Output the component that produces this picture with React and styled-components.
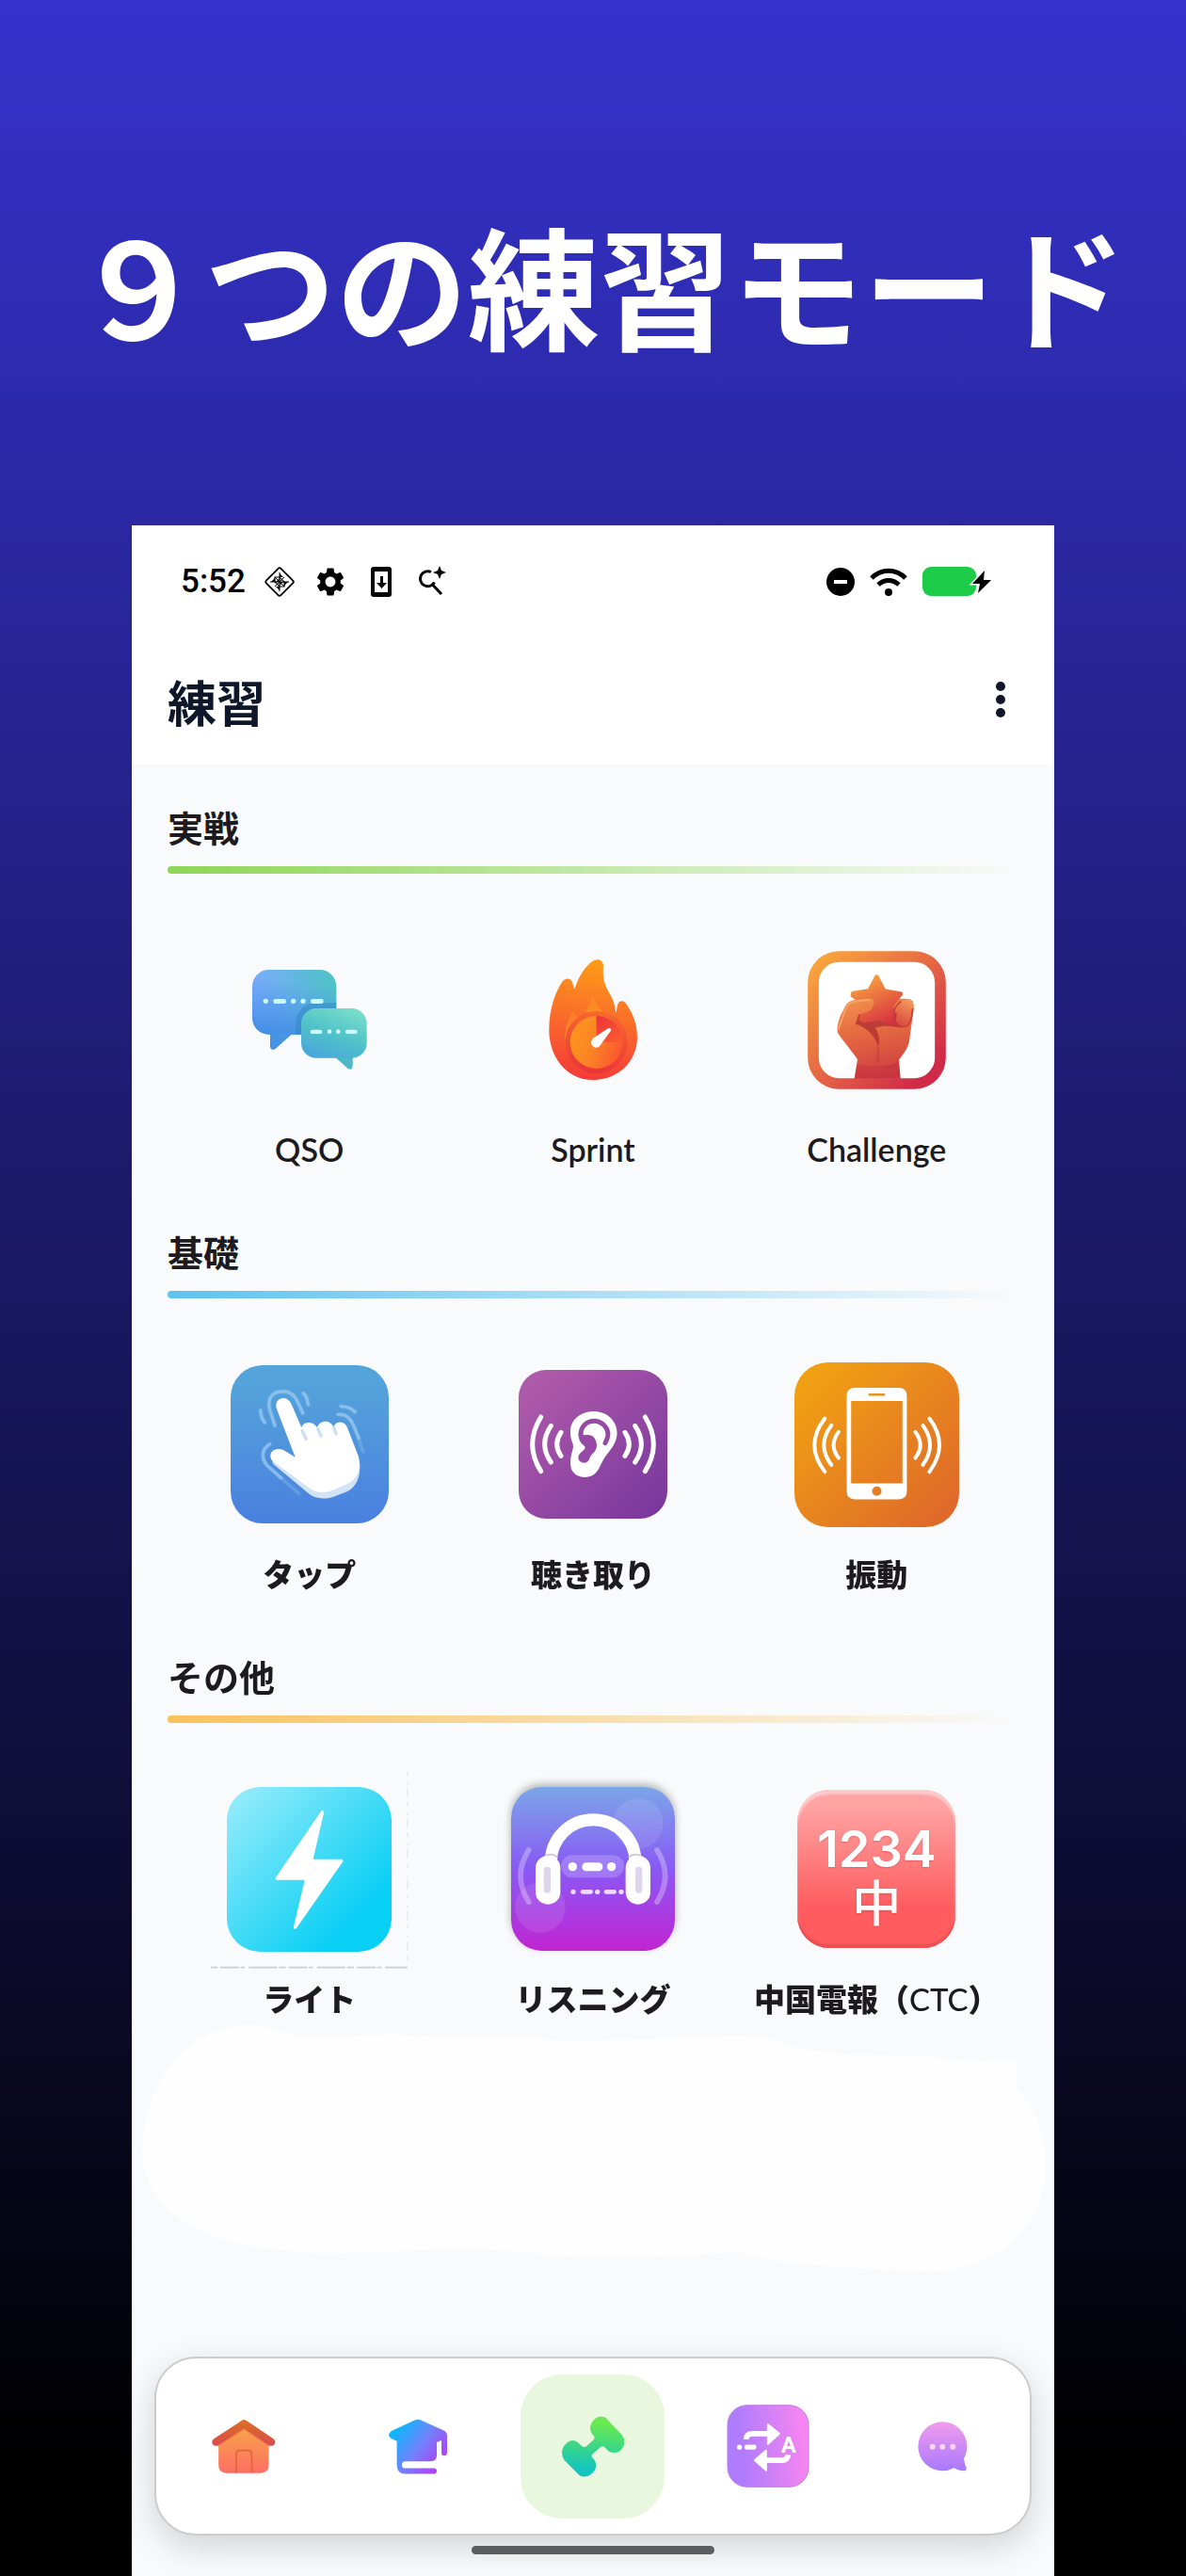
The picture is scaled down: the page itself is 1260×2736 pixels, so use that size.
import React from 'react';
import styled, { createGlobalStyle } from 'styled-components';
import { MdSettings } from 'react-icons/md';
import { useState } from 'react';

const GlobalStyle = createGlobalStyle`
	* {
		box-sizing: border-box;
	}

	body {
		margin: 0;
		font-family: Lato, 'Noto Sans CJK JP', sans-serif;
	}
`;

const Poster = styled.div`
	display: flex;
	flex-direction: column;
	min-height: 100vh;
	background: linear-gradient(#3532cd 0%, #000 96%);
`;

const Headline = styled.h1`
	margin: 0;
	padding: 200px 0 158px 14px;
	color: #fff;
	font-family: 'Noto Sans CJK JP', sans-serif;
	font-size: 140px;
	font-weight: 700;
	line-height: 200px;
	text-align: center;
	white-space: nowrap;
`;

const Phone = styled.div`
	flex: 1;
	display: flex;
	flex-direction: column;
	margin: 0 140px;
	background: #f9fafc;
	overflow: hidden;
`;

// Status bar

const StatusBar = styled.div`
	display: flex;
	justify-content: space-between;
	align-items: center;
	height: 120px;
	padding: 0 66px 0 52px;
	background: #fff;
	color: #000;
`;

const StatusGroup = styled.div`
	display: flex;
	align-items: center;
	gap: ${(props) => (props.$tight ? '16px' : '19px')};
`;

const Clock = styled.span`
	font-family: Roboto, sans-serif;
	font-size: 35px;
	font-weight: 500;
	line-height: 40px;
`;

// Header

const Header = styled.header`
	display: flex;
	justify-content: space-between;
	align-items: center;
	height: 134px;
	padding: 0 40px 0 38px;
	background: #fff;
	color: #0f172a;
`;

const Title = styled.h2`
	margin: 0;
	font-family: 'Noto Sans CJK JP', sans-serif;
	font-size: 52px;
	font-weight: 700;
	line-height: 100px;
`;

const MenuButton = styled.button`
	display: flex;
	justify-content: center;
	align-items: center;
	width: 34px;
	height: 60px;
	padding: 0 0 4px;
	border: 0;
	background: none;
	color: inherit;
	cursor: pointer;
`;

// Sections

const Content = styled.main`
	flex: 1;
	padding-top: 38px;
`;

const Section = styled.section`
	padding: 0 38px;
	margin-bottom: 56px;

	&:last-of-type {
		margin-bottom: 0;
	}
`;

const SectionTitle = styled.h3`
	margin: 0 0 14px;
	color: #1d1b20;
	font-family: 'Noto Sans CJK JP', sans-serif;
	font-size: 38px;
	font-weight: 700;
	line-height: 56px;
`;

const Divider = styled.div`
	height: 8px;
	border-radius: 4px;
	background: linear-gradient(90deg, ${(props) => props.$color}, transparent);
`;

const Grid = styled.div`
	display: grid;
	grid-template-columns: repeat(3, 1fr);
	margin-top: 47px;
`;

const Tile = styled.button`
	display: flex;
	flex-direction: column;
	align-items: center;
	gap: 6px;
	padding: 0;
	border: 0;
	background: none;
	cursor: pointer;
`;

const TileIcon = styled.span`
	display: flex;
	justify-content: center;
	align-items: center;
	height: 216px;

	svg {
		overflow: visible;
	}
`;

const TileLabel = styled.span`
	color: #1d1b20;
	font-family: Lato, 'Noto Sans CJK JP', sans-serif;
	font-size: ${(props) => (props.$latin ? '34px' : '33px')};
	font-weight: ${(props) => (props.$latin ? 600 : 800)};
	line-height: 48px;
	white-space: nowrap;
`;

const Thin = styled.span`
	font-weight: 500;
`;

const Cloud = styled.svg`
	display: block;
	width: 100%;
	height: 266px;
`;

// Bottom navigation

const NavBar = styled.nav`
	display: flex;
	align-items: center;
	height: 190px;
	margin: 0 24px;
	border: 2px solid #ccc;
	border-radius: 44px;
	background: #fff;
	box-shadow: 0 12px 36px rgba(0, 0, 0, 0.16);
`;

const NavItem = styled.a`
	flex: 1;
	display: flex;
	justify-content: center;
`;

const NavPill = styled.span`
	display: flex;
	justify-content: center;
	align-items: center;
	width: 153px;
	height: 153px;
	border-radius: 44px;
	background: ${(props) => (props.$active ? '#e9f7df' : 'transparent')};
`;

const HomeIndicator = styled.div`
	position: relative;
	width: 258px;
	height: 9px;
	margin: 11px auto 23px;
	border-radius: 5px;
	background: #5c5d60;
`;

// Status icons

const DiamondIcon = () => (
	<svg width="34" height="34" viewBox="0 0 34 34" fill="none" stroke="#000">
		<rect x="6" y="6" width="22" height="22" rx="2" transform="rotate(45 17 17)" strokeWidth="1.8" />
		<path d="M17 7v20M7 17h20M12 12l10 10M22 12L12 22" strokeWidth="1" />
		<path d="M17 8l4 4h-4zM26 17l-4 4v-4zM17 26l-4-4h4zM8 17l4-4v4z" fill="#000" stroke="none" />
		<path d="M12 12h5l5 5v5h-5l-5-5z" strokeWidth="1.2" />
		<path d="M13 17l4-4v4zM21 17l-4 4v-4z" fill="#000" stroke="none" />
	</svg>
);

const UpdateIcon = () => (
	<svg width="34" height="34" viewBox="0 0 34 34">
		<rect x="6" y="1" width="22" height="32" rx="3" fill="#000" />
		<rect x="10" y="6" width="14" height="22" fill="#fff" />
		<path d="M16 11h3v7h4l-5.500 6-5.500-6h4z" fill="#000" />
	</svg>
);

const SparkSearchIcon = () => (
	<svg width="34" height="34" viewBox="0 0 34 34" fill="none">
		<path d="M17 6.500A8 8 0 1 0 20.500 17.500M18.500 20L28 30" stroke="#000" strokeWidth="3" />
		<path d="M26 0l2 5 5 2-5 2-2 5-2-5-5-2 5-2z" fill="#000" />
	</svg>
);

const DoNotDisturbIcon = () => (
	<svg width="30" height="30" viewBox="0 0 30 30">
		<circle cx="15" cy="15" r="15" />
		<rect x="8" y="13" width="14" height="4" fill="#fff" />
	</svg>
);

const WifiIcon = () => (
	<svg width="40" height="30" viewBox="0 0 40 30" fill="none" stroke="#000" strokeWidth="5">
		<path d="M2 11C12 .500 28 .500 38 11" />
		<path d="M9 18C15.500 12 24.500 12 31 18" />
		<circle cx="20" cy="26" r="4" fill="#000" stroke="none" />
	</svg>
);

const BatteryIcon = () => (
	<svg width="74" height="32" viewBox="0 0 74 32">
		<rect x="0" y="0" width="57" height="31" rx="9" fill="#1ccb48" />
		<path d="M66 4L53 18h8l-2 10L73 14h-8z" fill="#000" stroke="#fff" strokeWidth="3" paintOrder="stroke" />
	</svg>
);

const KebabIcon = () => (
	<svg width="12" height="40" viewBox="0 0 12 40" fill="currentColor">
		<circle cx="6" cy="6" r="5" />
		<circle cx="6" cy="20" r="5" />
		<circle cx="6" cy="34" r="5" />
	</svg>
);

// Practice icons

const QsoIcon = () => (
	<svg width="122" height="106" viewBox="143 150 366 318">
		<defs>
			<linearGradient id="qsoBig" x1="0" y1="0.3" x2="1" y2="0.1">
				<stop offset="0" stopColor="#7cabff" />
				<stop offset="1" stopColor="#4cc3c4" />
			</linearGradient>
			<linearGradient id="qsoShade" x1="0.6" y1="0" x2="0.4" y2="1">
				<stop offset="0.2" stopColor="#4590e6" stopOpacity="0" />
				<stop offset="1" stopColor="#4590e6" />
			</linearGradient>
			<linearGradient id="qsoSmall" x1="0.7" y1="0" x2="0.2" y2="1">
				<stop offset="0" stopColor="#77dcca" />
				<stop offset="0.5" stopColor="#50c2c8" />
				<stop offset="1" stopColor="#4aa5dc" />
			</linearGradient>
			<clipPath id="qsoClip">
				<rect x="143" y="150" width="268" height="206" rx="53" />
			</clipPath>
		</defs>
		<path d="M200 340V395Q202 407 214 404L268 356H300V340Z" fill="#4793e4" />
		<rect x="143" y="150" width="268" height="206" rx="53" fill="url(#qsoBig)" />
		<rect x="143" y="150" width="268" height="206" rx="53" fill="url(#qsoShade)" />
		<rect x="281" y="255" width="240" height="190" rx="66" fill="#2f86bf" opacity="0.5" clipPath="url(#qsoClip)" />
		<path d="M405 427L448 465Q462 472 463 456V420Z" fill="#4bb9c9" />
		<rect x="299" y="273" width="209" height="158" rx="48" fill="url(#qsoSmall)" />
		<g fill="#cdfaff">
			<circle cx="186" cy="250" r="8" />
			<rect x="210" y="243" width="41" height="15" rx="7" />
			<circle cx="274" cy="250" r="8" />
			<circle cx="305" cy="250" r="8" />
			<rect x="329" y="243" width="41" height="15" rx="7" />
			<rect x="328" y="341" width="38" height="13" rx="6" />
			<circle cx="389" cy="347" r="7" />
			<circle cx="417" cy="347" r="7" />
			<rect x="440" y="341" width="38" height="13" rx="6" />
		</g>
	</svg>
);

const SprintIcon = () => (
	<svg width="94" height="128" viewBox="68 116 282 384">
		<defs>
			<linearGradient id="flame" x1="0.55" y1="0" x2="0.45" y2="1">
				<stop offset="0" stopColor="#fe9d16" />
				<stop offset="0.4" stopColor="#fb7627" />
				<stop offset="1" stopColor="#f43b38" />
			</linearGradient>
			<linearGradient id="dial" x1="0" y1="0.3" x2="1" y2="0.7">
				<stop offset="0" stopColor="#fd961c" />
				<stop offset="0.5" stopColor="#fb8226" />
				<stop offset="1" stopColor="#fa5430" />
			</linearGradient>
			<linearGradient id="dialRed" x1="0" y1="0" x2="0.8" y2="1">
				<stop offset="0" stopColor="#ec3339" />
				<stop offset="1" stopColor="#fa5a30" />
			</linearGradient>
			<linearGradient id="dialRing" x1="0.5" y1="0" x2="0.4" y2="1">
				<stop offset="0" stopColor="#f7682d" />
				<stop offset="1" stopColor="#ea3439" />
			</linearGradient>
		</defs>
		<path
			fill="url(#flame)"
			d="M210 500C120 500 68 420 69 340C69 270 92 215 112 186C124 172 142 176 145 195C147 205 149 210 151 210C160 175 185 135 212 119C228 112 243 120 242 138C238 180 250 205 262 225C274 245 280 265 281 285C283 285 284 280 287 262C291 246 306 245 314 256C338 290 350 325 350 365C350 440 290 500 210 500Z"
		/>
		<path fill="#fc8c22" d="M208 228C203 252 194 270 183 284L245 288C228 272 214 252 208 228Z" />
		<path fill="#fc8028" d="M146 280C128 308 117 340 120 372L164 302C156 296 150 290 146 280Z" />
		<circle cx="220" cy="380" r="99" fill="url(#dialRing)" />
		<circle cx="220" cy="380" r="84" fill="url(#dial)" />
		<path d="M220 380V296A84 84 0 0 1 304 380Z" fill="url(#dialRed)" />
		<path d="M208 368L257 336Q266 332 267 342L233 388Z" fill="#fff" />
		<circle cx="219" cy="381" r="16" fill="#fff" />
	</svg>
);

const ChallengeIcon = () => (
	<svg width="147" height="147" viewBox="893 89 441 441">
		<defs>
			<linearGradient id="frame" x1="0" y1="0" x2="1" y2="1">
				<stop offset="0.05" stopColor="#f8a23d" />
				<stop offset="0.5" stopColor="#e56545" />
				<stop offset="0.9" stopColor="#d12a48" />
			</linearGradient>
			<linearGradient id="fist" x1="0.3" y1="0" x2="0.5" y2="1">
				<stop offset="0" stopColor="#f18a45" />
				<stop offset="0.5" stopColor="#e26340" />
				<stop offset="1" stopColor="#cf3c42" />
			</linearGradient>
			<linearGradient id="star" gradientUnits="userSpaceOnUse" x1="1080" y1="170" x2="1150" y2="325">
				<stop offset="0" stopColor="#f7a440" />
				<stop offset="0.5" stopColor="#e8673f" />
				<stop offset="1" stopColor="#d63043" />
			</linearGradient>
			<linearGradient id="thumb" x1="0" y1="0" x2="0.3" y2="1">
				<stop offset="0" stopColor="#f39550" />
				<stop offset="1" stopColor="#e86f42" />
			</linearGradient>
			<linearGradient id="finger" x1="0.7" y1="0" x2="0.3" y2="1">
				<stop offset="0" stopColor="#f59a5e" />
				<stop offset="1" stopColor="#d9483f" />
			</linearGradient>
		</defs>
		<rect x="911" y="107" width="405" height="405" rx="83" fill="#fff" stroke="url(#frame)" strokeWidth="35" />
		<path
			fill="url(#fist)"
			d="M1042 496L1052 435C1040 415 1005 375 989 350C985 335 990 315 1000 290L1015 262C1025 245 1040 245 1060 245L1200 241C1225 240 1233 255 1231 275L1218 370C1215 400 1195 420 1184 436L1189 496Z"
		/>
		<path
			fill="#b32f35"
			opacity="0.8"
			d="M1045 322L1056 288L1180 285L1215 326C1190 344 1160 318 1108 334C1120 350 1125 372 1118 394C1108 360 1080 330 1045 322Z"
		/>
		<path
			fill="url(#star)"
			stroke="url(#star)"
			strokeWidth="14"
			strokeLinejoin="round"
			d="M1113 172L1137 217L1189 226L1160 262L1164 319L1118 303L1075 311L1064 306L1068 292L1092 282L1070 252L1037 231L1038 224L1090 216Z"
		/>
		<path
			fill="url(#finger)"
			d="M1180 268C1190 245 1215 234 1228 248C1235 262 1228 300 1218 318C1205 336 1182 330 1174 310C1178 298 1176 282 1180 268Z"
		/>
		<path
			fill="none"
			stroke="#c53c39"
			strokeWidth="5"
			d="M1228 272C1226 300 1220 320 1208 330M1190 250C1176 264 1164 272 1170 300"
		/>
		<path
			fill="url(#thumb)"
			d="M1008 276C1020 246 1045 244 1095 240C1112 244 1104 264 1096 274C1086 290 1058 284 1053 296L1045 322C1030 345 995 345 1008 276Z"
		/>
		<path
			fill="none"
			stroke="#f6a468"
			strokeWidth="6"
			strokeLinecap="round"
			d="M992 338L1014 272C1020 258 1030 252 1050 249L1090 245"
		/>
		<path
			fill="none"
			stroke="#b8342f"
			strokeWidth="5"
			d="M1132 456C1155 460 1175 452 1184 440M1118 394C1116 415 1114 430 1120 448"
			opacity="0.5"
		/>
		<path fill="#b8283a" opacity="0.3" d="M1050 450C1100 458 1150 458 1185 446L1189 496H1042Z" />
	</svg>
);

const TapIcon = () => (
	<svg width="168" height="168" viewBox="74 93 504 504">
		<defs>
			<linearGradient id="tap" x1="0" y1="0" x2="0" y2="1">
				<stop offset="0.1" stopColor="#54a3da" />
				<stop offset="1" stopColor="#4a80e0" />
			</linearGradient>
		</defs>
		<rect x="74" y="93" width="504" height="504" rx="102" fill="url(#tap)" />
		<g fill="none" stroke="#9fcdf2" strokeWidth="11" strokeLinecap="round" opacity="0.75">
			<path d="M215 285L200 240C188 200 205 176 243 176C275 178 285 200 304 246" />
			<path d="M169 236C170 255 176 268 183 276M306 182C316 192 320 205 321 219" />
			<path d="M425 224C447 224 462 233 471 242" />
			<path d="M416 250C445 248 458 265 468 290L482 325" />
			<path d="M482 325L496 368" opacity="0.4" />
			<path d="M199 344C172 360 170 390 190 412L235 452" />
			<path d="M235 452L292 502" opacity="0.4" />
		</g>
		<path
			fill="#d2e3f7"
			d="M202 385L210 408L318 498C340 518 368 522 400 513L445 496C475 480 488 452 486 405Z"
		/>
		<path
			fill="#fff"
			d="M220 230C212 195 254 186 267 215L300 292C305 272 338 270 350 292C357 266 392 266 402 290C410 268 438 270 446 292L482 385C492 425 475 458 445 472L395 493C365 503 342 498 322 482L210 400C188 378 210 350 242 363L280 386Z"
		/>
		<path
			fill="none"
			stroke="#cbdff6"
			strokeWidth="10"
			strokeLinecap="round"
			d="M302 302L315 328M352 296L362 318M403 292L410 311"
		/>
	</svg>
);

const ListenIcon = () => (
	<svg width="158" height="158" viewBox="993 108 474 474">
		<defs>
			<linearGradient id="ear" x1="0" y1="0" x2="1" y2="1">
				<stop offset="0.1" stopColor="#ae5aaa" />
				<stop offset="1" stopColor="#77359c" />
			</linearGradient>
		</defs>
		<rect x="993" y="108" width="474" height="474" rx="88" fill="url(#ear)" />
		<path
			fill="#fff"
			d="M1158 305C1158 262 1195 240 1235 240C1280 242 1307 275 1307 310C1305 345 1285 362 1267 388C1250 412 1248 450 1203 450C1172 448 1158 430 1158 405C1158 372 1170 362 1166 345C1162 330 1157 322 1158 305Z"
		/>
		<path
			fill="none"
			stroke="#964aa6"
			strokeWidth="15"
			strokeLinecap="round"
			d="M1191 316C1190 288 1210 270 1237 271C1265 275 1281 298 1277 320C1275 330 1271 336 1269 341"
		/>
		<path
			fill="#964aa6"
			d="M1184 314L1205 316C1232 310 1242 332 1242 350C1240 372 1222 375 1219 390C1215 410 1184 408 1183 388C1184 370 1203 368 1205 354C1202 345 1185 345 1184 314Z"
		/>
		<g fill="none" stroke="#fff" strokeWidth="15" strokeLinecap="round">
			<path d="M1064 258Q1010 345 1064 431M1096 286Q1056 345 1096 402M1128 307Q1102 345 1128 382" />
			<path d="M1396 258Q1450 345 1396 431M1364 286Q1404 345 1364 402M1332 307Q1358 345 1332 382" />
		</g>
	</svg>
);

const VibrateIcon = () => (
	<svg width="175" height="175" viewBox="490 81 526 526">
		<defs>
			<linearGradient id="vib" x1="0" y1="0" x2="1" y2="1">
				<stop offset="0.1" stopColor="#f1a013" />
				<stop offset="1" stopColor="#dd642c" />
			</linearGradient>
		</defs>
		<rect x="490" y="81" width="526" height="526" rx="108" fill="url(#vib)" />
		<path
			fill="#fff"
			fillRule="evenodd"
			d="M683 162H823Q849 162 849 188V492Q849 518 823 518H683Q657 518 657 492V188Q657 162 683 162ZM671 204V467H835V204ZM730 180Q726 180 726 184Q726 188 730 188H776Q780 188 780 184Q780 180 776 180ZM753 477A15 15 0 1 0 753 507A15 15 0 1 0 753 477Z"
		/>
		<g fill="none" stroke="#fff" strokeWidth="12" strokeLinecap="round">
			<path d="M587 260Q521 345 587 430M608 282Q560 345 608 408M631 303Q599 345 631 386" />
			<path d="M921 260Q985 345 921 430M900 282Q946 345 900 408M876 303Q908 345 876 386" />
		</g>
	</svg>
);

const LightIcon = () => (
	<svg width="175" height="175" viewBox="0 0 526 526">
		<defs>
			<linearGradient id="light" x1="0" y1="0" x2="1" y2="1">
				<stop offset="0.05" stopColor="#93ebfb" />
				<stop offset="0.8" stopColor="#08cff4" />
			</linearGradient>
		</defs>
		<path
			d="M-52 576H578"
			fill="none"
			stroke="#b9bcc0"
			strokeWidth="5"
			strokeDasharray="22 9 60 5 14 12 90 6"
			opacity="0.7"
		/>
		<path d="M577 -50V576" fill="none" stroke="#e6e8ea" strokeWidth="4" strokeDasharray="14 22 6 10 30 16" />
		<rect width="526" height="526" rx="106" fill="url(#light)" />
		<path
			d="M305 80L269 236H366L218 448L255 292H160Z"
			fill="#fff"
			stroke="#fff"
			strokeWidth="10"
			strokeLinejoin="round"
		/>
	</svg>
);

const HeadphonesTile = styled.svg`
	border-radius: 33px;
	box-shadow: 0 -3px 8px rgba(0, 0, 0, 0.3);
`;

const HeadphonesIcon = () => (
	<HeadphonesTile width="174" height="174" viewBox="0 0 522 522">
		<defs>
			<linearGradient id="phones" x1="0" y1="0" x2="0" y2="1">
				<stop offset="0" stopColor="#7ba6e8" />
				<stop offset="0.5" stopColor="#8959f5" />
				<stop offset="1" stopColor="#c224d2" />
			</linearGradient>
		</defs>
		<rect width="522" height="522" rx="98" fill="url(#phones)" />
		<circle cx="405" cy="116" r="80" fill="#fff" opacity="0.1" />
		<circle cx="93" cy="384" r="80" fill="#fff" opacity="0.1" />
		<path
			d="M56 201Q4 283 56 366M465 201Q517 283 465 366"
			fill="none"
			stroke="#fff"
			strokeWidth="17"
			strokeLinecap="round"
			opacity="0.3"
		/>
		<rect x="159" y="217" width="201" height="72" rx="36" fill="#fff" opacity="0.2" />
		<path d="M127 239A134 134 0 0 1 396 239" fill="none" stroke="#fff" strokeWidth="39" />
		<path d="M104 224Q127 206 148 224M374 224Q396 206 420 224" fill="none" stroke="#c9c4d6" strokeWidth="5" />
		<g fill="#fff">
			<rect x="78" y="219" width="79" height="155" rx="39" />
			<rect x="365" y="219" width="79" height="155" rx="39" />
			<circle cx="196" cy="254" r="14" />
			<rect x="226" y="241" width="66" height="27" rx="13" />
			<circle cx="320" cy="254" r="14" />
		</g>
		<g fill="#ded4ec">
			<rect x="104" y="254" width="22" height="84" rx="11" />
			<rect x="396" y="254" width="22" height="84" rx="11" />
		</g>
		<g fill="#ecdcfc">
			<circle cx="198" cy="334" r="8" />
			<rect x="221" y="327" width="40" height="14" rx="7" />
			<circle cx="275" cy="334" r="8" />
			<rect x="296" y="327" width="40" height="14" rx="7" />
			<circle cx="351" cy="334" r="8" />
		</g>
	</HeadphonesTile>
);

const CtcTile = styled.span`
	display: flex;
	flex-direction: column;
	align-items: center;
	width: 168px;
	height: 168px;
	padding-top: 36px;
	border-radius: 34px;
	background: linear-gradient(#ffa3a3 10%, #fe5c5e 75%);
	box-shadow: inset 0 5px 2px #ffc9cb, inset 0 -4px 1px #ea5054;
	color: #fff;
	text-shadow: 0 1px 2px rgba(160, 30, 30, 0.3);
`;

const CtcDigits = styled.span`
	font-family: Inter, sans-serif;
	font-size: 54px;
	font-weight: 600;
	line-height: 54px;
`;

const CtcChar = styled.span`
	font-family: 'Noto Sans CJK JP', sans-serif;
	font-size: 52px;
	font-weight: 500;
	line-height: 56px;
`;

const CtcIcon = () => (
	<CtcTile>
		<CtcDigits>1234</CtcDigits>
		<CtcChar>中</CtcChar>
	</CtcTile>
);

// Navigation icons

const HomeIcon = () => (
	<svg width="68" height="57" viewBox="255 271 203 171">
		<defs>
			<linearGradient id="homeWall" x1="0" y1="0" x2="0" y2="1">
				<stop offset="0" stopColor="#f7a74a" />
				<stop offset="1" stopColor="#fd6e63" />
			</linearGradient>
			<linearGradient id="homeRoof" x1="0" y1="0" x2="0" y2="1">
				<stop offset="0" stopColor="#dc6a28" />
				<stop offset="1" stopColor="#db5048" />
			</linearGradient>
		</defs>
		<path d="M276 345L357 288L436 345V415Q436 441 410 441H302Q276 441 276 415Z" fill="url(#homeWall)" />
		<path
			d="M268 349L357 292L444 349"
			fill="none"
			stroke="#ea7040"
			strokeWidth="20"
			strokeLinejoin="round"
			opacity="0.5"
		/>
		<path
			d="M268 342L357 284L444 342"
			fill="none"
			stroke="url(#homeRoof)"
			strokeWidth="25"
			strokeLinecap="round"
			strokeLinejoin="round"
		/>
		<path d="M332 440V382Q332 369 345 369H369Q382 369 382 382V440" fill="none" stroke="#e4643c" strokeWidth="5" />
	</svg>
);

const LearnIcon = () => (
	<svg width="62" height="59" viewBox="820 265 187 177">
		<defs>
			<linearGradient id="learn" x1="0" y1="0.2" x2="1" y2="0.9">
				<stop offset="0.1" stopColor="#12b5fc" />
				<stop offset="0.5" stopColor="#7480fc" />
				<stop offset="0.8" stopColor="#a34ef6" />
				<stop offset="1" stopColor="#c03ee6" />
			</linearGradient>
		</defs>
		<path
			fill="url(#learn)"
			d="M903 269Q913 264 923 269L997 302Q1007 307 1007 320V374Q1006 383 998 383Q989 383 989 374V334L974 340V383Q972 401 955 401H874Q862 401 862 412Q862 423 874 423H965Q974 424 974 432Q973 441 965 441H872Q846 440 846 412V336L828 328Q820 324 820 316Q821 308 830 303Z"
		/>
	</svg>
);

const DumbbellIcon = () => (
	<svg width="68" height="65" viewBox="1368 258 204 194">
		<defs>
			<linearGradient id="bell" gradientUnits="userSpaceOnUse" x1="1480" y1="262" x2="1460" y2="448">
				<stop offset="0.1" stopColor="#68ea50" />
				<stop offset="0.5" stopColor="#3bd787" />
				<stop offset="0.9" stopColor="#14c5bd" />
			</linearGradient>
		</defs>
		<path
			fill="url(#bell)"
			d="M1388 342Q1408 328 1424 344L1436 355Q1442 359 1449 354L1472 333Q1477 328 1473 321Q1454 302 1465 281Q1480 252 1509 262L1561 316Q1578 338 1564 360Q1548 382 1521 371L1505 355Q1499 352 1493 357L1468 380Q1463 385 1468 391Q1486 408 1476 430Q1457 458 1428 448L1378 398Q1360 365 1388 342Z"
		/>
	</svg>
);

const ConvertIcon = () => (
	<svg width="88" height="88" viewBox="458 219 263 265">
		<defs>
			<linearGradient id="convert" x1="0" y1="0.1" x2="1" y2="0">
				<stop offset="0.1" stopColor="#ae7cfd" />
				<stop offset="0.9" stopColor="#f585f0" />
			</linearGradient>
		</defs>
		<rect x="460" y="221" width="259" height="261" rx="62" fill="url(#convert)" stroke="#c07be6" strokeWidth="3" />
		<g fill="none" stroke="#fff" strokeWidth="17">
			<path d="M519 330Q520 312 540 312H592" />
			<path d="M654 379Q652 397 634 397H582" />
		</g>
		<g fill="#fff" stroke="#fff" strokeWidth="6" strokeLinejoin="round">
			<path d="M589 282L625 312L589 345Z" />
			<path d="M583 366L547 397L583 429Z" />
		</g>
		<circle cx="498" cy="355" r="8" fill="#fff" />
		<rect x="514" y="347" width="38" height="16" rx="7" fill="#fff" />
		<text x="655" y="374" fill="#fff" fontFamily="Roboto, sans-serif" fontSize="72" fontWeight="700" textAnchor="middle">
			A
		</text>
	</svg>
);

const ChatIcon = () => (
	<svg width="53" height="53" viewBox="1063 275 159 159">
		<defs>
			<linearGradient id="chat" x1="0" y1="0" x2="0" y2="1">
				<stop offset="0" stopColor="#f29bed" />
				<stop offset="1" stopColor="#a879fd" />
			</linearGradient>
		</defs>
		<path
			fill="url(#chat)"
			d="M1142 276A78 78 0 0 1 1220 354Q1220 375 1210 393Q1212 410 1218 422Q1220 433 1208 432Q1192 430 1178 423Q1162 432 1142 432A78 78 0 0 1 1142 276Z"
		/>
		<g fill="#fbd6fb">
			<circle cx="1110" cy="355" r="9" />
			<circle cx="1142" cy="355" r="9" />
			<circle cx="1175" cy="355" r="9" />
		</g>
	</svg>
);

const sections = [
	{
		title: '実戦',
		color: '#8ed655',
		items: [
			{ label: 'QSO', latin: true, Icon: QsoIcon },
			{ label: 'Sprint', latin: true, Icon: SprintIcon },
			{ label: 'Challenge', latin: true, Icon: ChallengeIcon }
		]
	},
	{
		title: '基礎',
		color: '#5fc3ef',
		items: [
			{ label: 'タップ', Icon: TapIcon },
			{ label: '聴き取り', Icon: ListenIcon },
			{ label: '振動', Icon: VibrateIcon }
		]
	},
	{
		title: 'その他',
		color: '#f8c25c',
		items: [
			{ label: 'ライト', Icon: LightIcon },
			{ label: 'リスニング', Icon: HeadphonesIcon },
			{ label: <>中国電報（<Thin>CTC</Thin>）</>, Icon: CtcIcon }
		]
	}
];

const navItems = [
	{ id: 'home', name: 'ホーム', Icon: HomeIcon },
	{ id: 'learn', name: '学習', Icon: LearnIcon },
	{ id: 'practice', name: '練習', Icon: DumbbellIcon },
	{ id: 'convert', name: '変換', Icon: ConvertIcon },
	{ id: 'chat', name: 'チャット', Icon: ChatIcon }
];

function App() {
	const [ active, setActive ] = useState('practice');

	return (
		<Poster>
			<GlobalStyle />
			<Headline>９つの練習モード</Headline>

			<Phone>
				<StatusBar>
					<StatusGroup>
						<Clock>5:52</Clock>
						<DiamondIcon />
						<MdSettings size={36} />
						<UpdateIcon />
						<SparkSearchIcon />
					</StatusGroup>
					<StatusGroup $tight>
						<DoNotDisturbIcon />
						<WifiIcon />
						<BatteryIcon />
					</StatusGroup>
				</StatusBar>

				<Header>
					<Title>練習</Title>
					<MenuButton type="button" aria-label="メニュー">
						<KebabIcon />
					</MenuButton>
				</Header>

				<Content>
					{sections.map(({ title, color, items }) => (
						<Section key={title}>
							<SectionTitle>{title}</SectionTitle>
							<Divider $color={color} />
							<Grid>
								{items.map(({ label, latin, Icon }, i) => (
									<Tile key={i} type="button">
										<TileIcon>
											<Icon />
										</TileIcon>
										<TileLabel $latin={latin}>{label}</TileLabel>
									</Tile>
								))}
							</Grid>
						</Section>
					))}

					<Cloud viewBox="0 0 980 266" preserveAspectRatio="none">
						<path
							fill="#fefefe"
							d="M11 138C12 75 50 5 125 4C150 5 162 12 175 16C220 18 240 14 280 14C340 18 380 16 420 16C440 20 460 22 490 21C520 18 560 20 600 17C640 14 670 12 705 28C740 36 790 36 840 37C870 40 890 42 940 42V72C965 95 972 130 971 160C965 210 935 260 850 266C790 262 700 262 645 245C590 248 520 252 450 249C400 240 330 242 280 244C230 244 210 250 175 244C60 238 12 190 11 138Z"
						/>
					</Cloud>
				</Content>

				<NavBar>
					{navItems.map(({ id, name, Icon }) => (
						<NavItem
							key={id}
							href={`#${id}`}
							aria-label={name}
							aria-current={active === id ? 'page' : undefined}
							onClick={() => setActive(id)}
						>
							<NavPill $active={active === id}>
								<Icon />
							</NavPill>
						</NavItem>
					))}
				</NavBar>
				<HomeIndicator />
			</Phone>
		</Poster>
	);
}

export default App;
